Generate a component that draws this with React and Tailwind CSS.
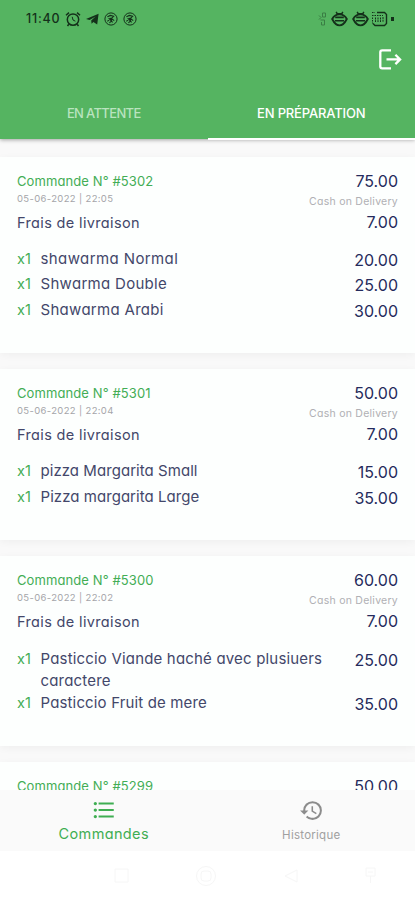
import { MdFormatListBulleted, MdHistory } from "react-icons/md";
import clsx from "clsx";

const orders = [
  {
    id: "5302",
    date: "05-06-2022 | 22:05",
    total: "75.00",
    items: [
      { name: "shawarma Normal", price: "20.00", fit: "tracking-[0.4px]" },
      { name: "Shwarma Double", price: "25.00", fit: "tracking-[0.3px]" },
      { name: "Shawarma Arabi", price: "30.00", fit: "tracking-[0.3px]" },
    ],
  },
  {
    id: "5301",
    date: "05-06-2022 | 22:04",
    total: "50.00",
    items: [
      { name: "pizza Margarita Small", price: "15.00", fit: "tracking-[0.05px]" },
      { name: "Pizza margarita Large", price: "35.00", fit: "tracking-[0.05px]" },
    ],
  },
  {
    id: "5300",
    date: "05-06-2022 | 22:02",
    total: "60.00",
    items: [
      { name: "Pasticcio Viande haché avec plusiuers caractere", price: "25.00", fit: "tracking-[0.18px]" },
      { name: "Pasticcio Fruit de mere", price: "35.00", fit: "tracking-[0.15px]" },
    ],
  },
  { id: "5299", total: "50.00" },
];

const AlarmIcon = () => (
  <svg width="16" height="16" viewBox="0 0 16 16" fill="none" stroke="currentColor" strokeWidth="1.5">
    <circle cx="8" cy="8.6" r="5.7" />
    <path d="M1 4.2 4 1.6M15 4.2 12 1.6M3.8 13.2 2.5 15M12.2 13.2l1.3 1.8" />
    <path d="M7.2 5.8 8 9l2.4 1.2" strokeWidth="1" />
  </svg>
);

const PlaneIcon = () => (
  <svg width="13" height="12" viewBox="0 0 13 12" fill="currentColor">
    <path d="M0 6 12.6.8 11.2 11.4 7.4 9 5.6 10.8 5.2 7.6 9.6 3.6 3.6 7Z" />
  </svg>
);

const BallIcon = () => (
  <svg width="14" height="14" viewBox="0 0 14 14" fill="none" stroke="currentColor" strokeWidth="1">
    <circle cx="7" cy="7" r="6.1" />
    <path d="M3.4 4.8 6.4 3.4l3.2.8-2.2 2.2 2.8 2.2M3.4 9.4l3.2-3 1 2.4-2.2 2M4.6 6l4 4.4" strokeWidth="1.1" />
  </svg>
);

const BugIcon = () => (
  <svg width="17" height="16" viewBox="0 0 17 16" fill="none" stroke="currentColor" strokeWidth="1.9">
    <path d="M5.2.8 6.2 2.8h4.6l1-2" strokeWidth="1.5" />
    <path d="M1.2 8C3 4.8 5 3.4 8.5 3.4S14 4.8 15.8 8C14 11.6 12 14.4 8.5 14.4S3 11.6 1.2 8Z" />
    <path d="M4.2 6.4h8.6M4 9.8h9" strokeWidth="1.6" />
  </svg>
);

const VibrateIcon = () => (
  <svg width="9" height="14" viewBox="0 0 9 14" fill="none" stroke="currentColor" strokeWidth="1" className="opacity-40">
    <path d="M4.5 1h3v4h-3zM1 3.5l2 2-2 2M2.5 8h4v5h-3v-3" />
  </svg>
);

const BatteryIcon = () => (
  <svg width="17" height="16" viewBox="0 0 17 16" fill="none" stroke="currentColor">
    <path d="M6 1.5h7.5l2 2v9l-2 2H4l-2-2" strokeWidth="1.4" />
    <path d="M1 1.5h3M1 4.5h11M1.5 6.5v6" strokeDasharray="1.5 1" />
    <path d="M4.5 6.5v4.5M7 6.5v4.5M9.5 6.5v4.5M12 6v5" strokeDasharray="2 .7" />
  </svg>
);

const LogoutIcon = () => (
  <svg width="23" height="21" viewBox="0 0 23 21" fill="none" stroke="currentColor" strokeWidth="2.3">
    <path d="M12 1.4H3.2Q1.3 1.4 1.3 3.3v14.2q0 1.9 1.9 1.9H12" />
    <path d="M7.5 10.4h13.5M16.4 5.7l4.7 4.7-4.7 4.7" />
  </svg>
);

const Header = () => (
  <header className="relative z-10 h-[139px] shrink-0 bg-[#55b461] shadow-[0_1px_4px_rgba(0,0,0,0.35)]">
    <div className="flex h-[38px] items-center pr-[21px] pl-[26px] text-[#14301a]">
      <span className="w-[35px] text-[12.5px] font-medium tracking-[0.8px]">11:40</span>
      <div className="ml-[4px] flex items-center gap-[5px]">
        <AlarmIcon />
        <PlaneIcon />
        <BallIcon />
        <BallIcon />
      </div>
      <div className="ml-auto flex items-center">
        <VibrateIcon />
        <span className="ml-[4px]"><BugIcon /></span>
        <span className="ml-[4px]"><BugIcon /></span>
        <span className="ml-[2px]"><BatteryIcon /></span>
        <span className="ml-[3px] h-[4px] w-[3px] bg-current" />
      </div>
    </div>
    <div className="flex h-[51px] justify-end pt-[11px] pr-[13.5px] text-white">
      <button type="button" aria-label="Déconnexion" className="h-[21px]">
        <LogoutIcon />
      </button>
    </div>
    <nav className="grid h-[50px] grid-cols-2 text-center text-[13px] leading-[49px] font-medium">
      <span className="tracking-[-0.65px] text-[#b9e3bf]">EN ATTENTE</span>
      <span className="border-b-2 border-white tracking-[-0.15px] text-white">EN PRÉPARATION</span>
    </nav>
  </header>
);

const OrderCard = ({ order }) => (
  <article className="bg-[#fdfffe] px-[17px] pt-[14px] pb-[29px] shadow-[0_2px_8px_rgba(0,0,0,0.045)]">
    <div className="flex justify-between">
      <div>
        <h2 className="text-[13px] leading-[20px] tracking-[0.1px] text-[#43ad55]">Commande N° #{order.id}</h2>
        {order.date && (
          <>
            <p className="text-[9.5px] leading-[15px] tracking-[0.35px] text-[#a5a5a9]">{order.date}</p>
            <p className="mt-[6px] text-[14.5px] leading-[22px] tracking-[0.35px]">Frais de livraison</p>
          </>
        )}
      </div>
      <div className="text-right">
        <p className="text-[16px] leading-[21px] text-[#252b5c]">{order.total}</p>
        {order.date && (
          <>
            <p className="mt-[3px] text-[10.5px] leading-[14px] tracking-[0.25px] text-[#b0b0b4]">Cash on Delivery</p>
            <p className="mt-[3px] h-[22px] text-[16px] leading-[21px] text-[#252b5c]">7.00</p>
          </>
        )}
      </div>
    </div>
    {order.items && (
      <ul className="mt-[14.5px]">
        {order.items.map((item) => (
          <li key={item.name} className="flex min-h-[25.3px] items-start">
            <span className="w-[23.5px] shrink-0 text-[14.5px] leading-[22px] text-[#43ad55]">x1</span>
            <span className={clsx("w-[295px] text-[15px] leading-[22px]", item.fit)}>{item.name}</span>
            <span className="ml-auto text-[16px] leading-[24px] text-[#252b5c]">{item.price}</span>
          </li>
        ))}
      </ul>
    )}
  </article>
);

const BottomTabs = () => (
  <nav className="grid h-[61px] shrink-0 grid-cols-2 bg-[#fafafa] text-center">
    <div className="flex flex-col items-center pt-[7px] text-[#3fae52]">
      <MdFormatListBulleted size={26} />
      <span className="text-[14.5px] leading-[21px] tracking-[0.35px]">Commandes</span>
    </div>
    <div className="flex flex-col items-center pt-[8px] text-[#8c8c8c]">
      <MdHistory size={25} />
      <span className="text-[11.5px] leading-[24px] tracking-[0.25px] text-[#a0a0a0]">Historique</span>
    </div>
  </nav>
);

// Android's own buttons, almost invisible on white
const SystemBar = () => (
  <div className="flex h-[49px] shrink-0 items-center justify-between bg-white pr-[38px] pl-[114px] text-[#f6f6f6]">
    <svg width="15" height="15" fill="none" stroke="currentColor"><path d="M1 1h13v13H1z" /></svg>
    <svg width="22" height="22" fill="none" stroke="currentColor">
      <circle cx="11" cy="11" r="9.5" />
      <rect x="6" y="6" width="10" height="10" rx="3" />
    </svg>
    <svg width="16" height="16" fill="none" stroke="currentColor"><path d="M14 2v12L2 8z" /></svg>
    <svg width="12" height="17" fill="none" stroke="currentColor"><path d="M1 1h9v8H1zM5.5 9v7M3 5h5" /></svg>
  </div>
);

export default function App() {
  return (
    <div className="flex h-[900px] w-[415px] flex-col overflow-hidden bg-white font-['Inter',sans-serif] text-[#43476a] [font-feature-settings:'cv11']">
      <Header />
      <main className="flex min-h-0 flex-1 flex-col gap-[16px] overflow-hidden bg-[#f9f9f9] pt-[17.6px]">
        {orders.map((order) => (
          <OrderCard key={order.id} order={order} />
        ))}
      </main>
      <BottomTabs />
      <SystemBar />
    </div>
  );
}
